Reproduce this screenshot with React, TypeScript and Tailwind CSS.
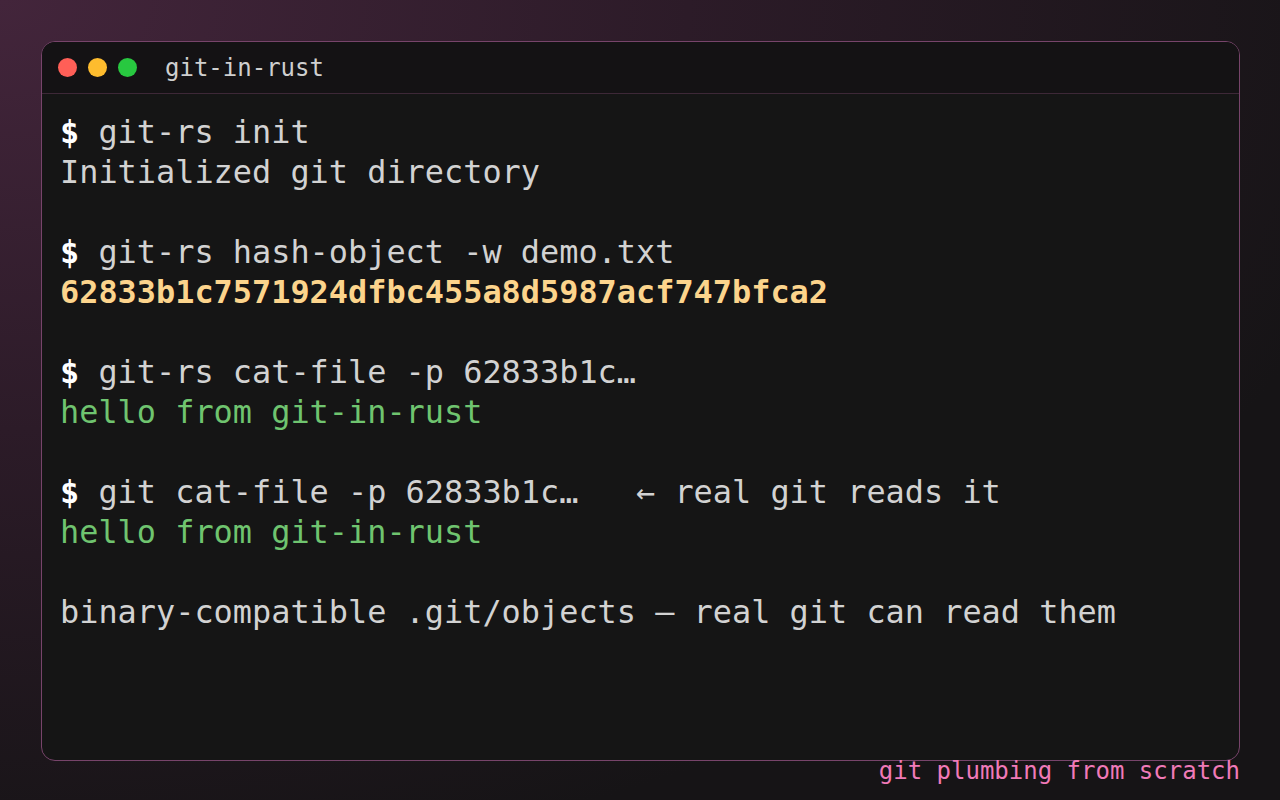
const mono = "font-['DejaVu_Sans_Mono','Liberation_Mono',monospace]";

type Line = { prompt?: boolean; text: string; tone?: "out" | "hash" | "green" | "blank" };

const lines: Line[] = [
  { prompt: true, text: "git-rs init" },
  { text: "Initialized git directory", tone: "out" },
  { text: "", tone: "blank" },
  { prompt: true, text: "git-rs hash-object -w demo.txt" },
  { text: "62833b1c7571924dfbc455a8d5987acf747bfca2", tone: "hash" },
  { text: "", tone: "blank" },
  { prompt: true, text: "git-rs cat-file -p 62833b1c…" },
  { text: "hello from git-in-rust", tone: "green" },
  { text: "", tone: "blank" },
  { prompt: true, text: "git cat-file -p 62833b1c…   ← real git reads it" },
  { text: "hello from git-in-rust", tone: "green" },
  { text: "", tone: "blank" },
  { text: "binary-compatible .git/objects — real git can read them", tone: "out" },
];

const TermLine = ({ line }: { line: Line }) => {
  if (line.tone === "blank") return <div className="h-10" />;
  if (line.prompt) {
    return (
      <div className="h-10 whitespace-pre text-[#d2d2d2]">
        <span className="font-bold text-white">$</span> {line.text}
      </div>
    );
  }
  const color =
    line.tone === "hash"
      ? "font-bold text-[#fcd48c]"
      : line.tone === "green"
        ? "text-[#6fc46f]"
        : "text-[#d2d2d2]";
  return <div className={`h-10 whitespace-pre ${color}`}>{line.text}</div>;
};

export default function App() {
  return (
    <div
      className={`h-[800px] w-[1280px] overflow-hidden bg-[radial-gradient(ellipse_at_0%_0%,#43253b_0%,#2c1b28_38%,#161416_78%)] ${mono}`}
    >
      <div className="flex flex-col pl-[41px] pr-[40px] pt-[41px]">
        <div className="flex h-[720px] flex-col overflow-hidden rounded-[14px] border border-[#77446a] bg-[#151515]">
          <div className="flex h-[52px] items-center border-b border-[#3d2837] bg-[#141214] pl-[16px]">
            <div className="flex gap-[11px]">
              <span className="h-[19px] w-[19px] rounded-full bg-[#ff5f57]" />
              <span className="h-[19px] w-[19px] rounded-full bg-[#febc2e]" />
              <span className="h-[19px] w-[19px] rounded-full bg-[#28c840]" />
            </div>
            <span className="ml-[28px] text-[24px] leading-none text-[#cfcfcf]">git-in-rust</span>
          </div>
          <div className="px-[18px] pt-[18px] text-[31.9px] leading-[40px]">
            {lines.map((l, i) => (
              <TermLine key={i} line={l} />
            ))}
          </div>
        </div>
        <div className="-mt-[2px] text-right text-[24px] leading-[24px] text-[#f07ab8]">
          git plumbing from scratch
        </div>
      </div>
    </div>
  );
}
